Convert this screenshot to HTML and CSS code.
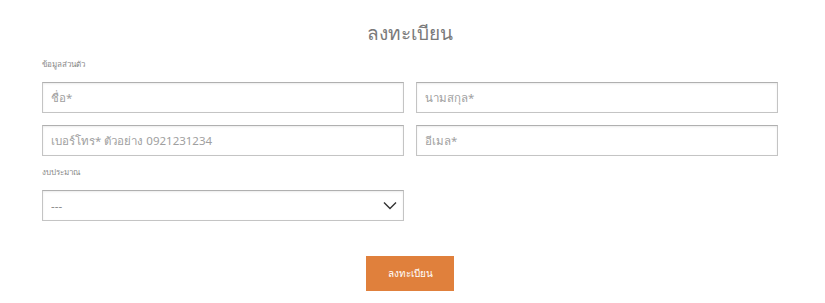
FILE: index.html
```html
<!DOCTYPE html>
<html lang="th">
<head>
  <meta charset="UTF-8">
  <meta name="viewport" content="width=device-width, initial-scale=1.0">
  <title>ลงทะเบียน</title>
  <link rel="stylesheet" href="styles.css">
</head>
<body>
  <div class="container">
    <div class="header">ลงทะเบียน</div>

    <!-- Personal info -->
    <div class="section-label">ข้อมูลส่วนตัว</div>
    <div class="form-grid">
      <input type="text" placeholder="ชื่อ*" />
      <input type="text" placeholder="นามสกุล*" />
      <input type="text" placeholder="เบอร์โทร* ตัวอย่าง 0921231234" />
      <input type="text" placeholder="อีเมล*" />
    </div>

    <!-- Budget -->
    <div class="section-label budget-label">งบประมาณ</div>
    <div class="form-grid">
      <div class="select-wrap">
        <select>
          <option>---</option>
        </select>
        <svg class="chevron" width="14" height="9" viewBox="0 0 14 9"><path d="M1 1.5 7 7.5 13 1.5" fill="none" stroke="#333" stroke-width="1.4"/></svg>
      </div>
    </div>

    <div class="actions">
      <button class="button">ลงทะเบียน</button>
    </div>
  </div>
</body>
</html>
```

FILE: styles.css
```css
body {
  font-family: "Noto Sans", "DejaVu Sans", sans-serif;
  background: #FFFFFF;
  color: #666666;
  margin: 0;
  padding: 0;
}

.container {
  width: 736px;
  margin: 0 0 0 42px;
  padding-top: 20px;
}

.header {
  font-size: 19px;
  font-weight: 300;
  color: #7A7A7A;
  text-align: center;
  height: 26px;
  line-height: 26px;
}

.section-label {
  font-size: 8px;
  color: #888888;
  margin-top: 12px;
  height: 12px;
  line-height: 12px;
}

.budget-label {
  margin-top: 10px;
}

.form-grid {
  display: grid;
  grid-template-columns: 362px 362px;
  column-gap: 12px;
  row-gap: 12px;
  margin-top: 12px;
}

.form-grid input,
.form-grid select {
  box-sizing: border-box;
  width: 100%;
  height: 31px;
  border: 1px solid #C4C4C4;
  border-top-color: #B0B0B0;
  box-shadow: inset 0 1px 2px rgba(0, 0, 0, 0.08);
  border-radius: 0;
  padding: 0 8px;
  font-family: inherit;
  font-size: 11.5px;
  color: #555555;
  background: #FFFFFF;
  outline: none;
}

.form-grid input::placeholder {
  color: #A0A0A0;
}

.select-wrap {
  position: relative;
}

.select-wrap select {
  appearance: none;
  -webkit-appearance: none;
  color: #888888;
}

.chevron {
  position: absolute;
  right: 7px;
  top: 11px;
  pointer-events: none;
}

.actions {
  display: flex;
  justify-content: center;
  margin-top: 35px;
}

.button {
  background-color: #E0803C;
  color: #FFFFFF;
  width: 88px;
  height: 35px;
  border: none;
  font-family: inherit;
  font-size: 10px;
  cursor: pointer;
}
```
